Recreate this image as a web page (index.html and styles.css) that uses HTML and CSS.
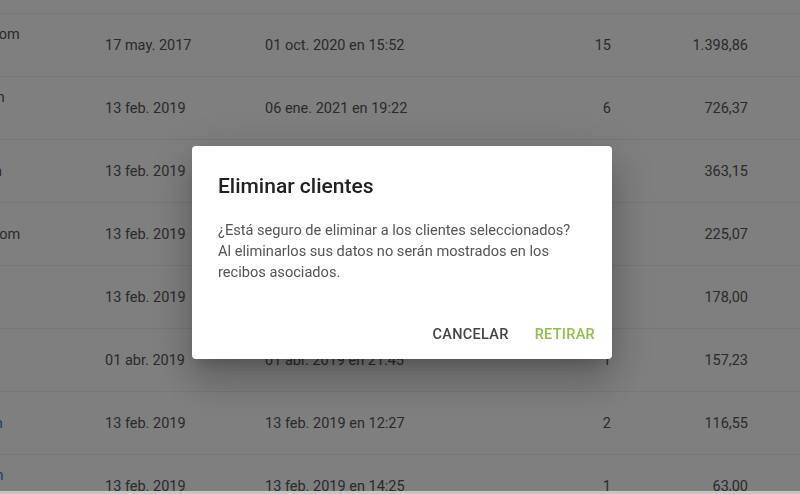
FILE: index.html
```html
<!DOCTYPE html>
<html lang="es">
<head>
  <meta charset="UTF-8">
  <title>Clientes</title>
  <link rel="stylesheet" href="styles.css">
</head>
<body>
  <div class="table-wrap">
    <table class="clients">
      <colgroup>
        <col class="c-email"><col class="c-alta"><col class="c-ultimo"><col class="c-recibos"><col class="c-total"><col class="c-rest">
      </colgroup>
      <tbody>
        <tr><td>pedro.alvarez@gmail.com</td><td>02 ene. 2017</td><td>12 mar. 2020 en 10:12</td><td class="num">21</td><td class="num">1.620,40</td><td></td></tr>
        <tr><td><div>gestion.martinez.sl@hotmail.com</div><div>&nbsp;</div></td><td>17 may. 2017</td><td>01 oct. 2020 en 15:52</td><td class="num">15</td><td class="num">1.398,86</td><td></td></tr>
        <tr><td><div>laura.fernandez.r@outlook.com</div><div>&nbsp;</div></td><td>13 feb. 2019</td><td>06 ene. 2021 en 19:22</td><td class="num">6</td><td class="num">726,37</td><td></td></tr>
        <tr><td>ramon.gutierrez.ro@gmail.com</td><td>13 feb. 2019</td><td>13 feb. 2019 en 11:05</td><td class="num">3</td><td class="num">363,15</td><td></td></tr>
        <tr><td>contabilidad.sanchez@gmail.com</td><td>13 feb. 2019</td><td>13 feb. 2019 en 11:40</td><td class="num">3</td><td class="num">225,07</td><td></td></tr>
        <tr><td>Sin correo</td><td>13 feb. 2019</td><td>13 feb. 2019 en 11:58</td><td class="num">2</td><td class="num">178,00</td><td></td></tr>
        <tr><td>Sin correo</td><td>01 abr. 2019</td><td>01 abr. 2019 en 21:45</td><td class="num">1</td><td class="num">157,23</td><td></td></tr>
        <tr><td class="link">josep.manuel.ortiz@gmail.com</td><td>13 feb. 2019</td><td>13 feb. 2019 en 12:27</td><td class="num">2</td><td class="num">116,55</td><td></td></tr>
        <tr><td><div class="link">maria.jose.serrano@gmail.com</div><div>&nbsp;</div></td><td>13 feb. 2019</td><td>13 feb. 2019 en 14:25</td><td class="num">1</td><td class="num">63,00</td><td></td></tr>
      </tbody>
    </table>
  </div>

  <div class="overlay">
    <div class="dialog">
      <h3 class="dialog-title">Eliminar clientes</h3>
      <p class="dialog-text">¿Está seguro de eliminar a los clientes seleccionados? Al eliminarlos sus datos no serán mostrados en los recibos asociados.</p>
      <div class="dialog-actions">
        <button type="button" class="btn">Cancelar</button>
        <button type="button" class="btn btn-primary">Retirar</button>
      </div>
    </div>
  </div>
  <div class="hscroll"></div>
</body>
</html>
```

FILE: styles.css
```css
body {
  font-family: Roboto, 'Liberation Sans', Arial, sans-serif;
  background: #fff;
  margin: 0;
  padding: 0;
  overflow: hidden;
}
.table-wrap {
  margin: -49px 0 0 -198px;
}
table.clients {
  border-collapse: collapse;
  table-layout: fixed;
  width: 1100px;
}
.c-email { width: 303px; }
.c-alta { width: 160px; }
.c-ultimo { width: 235px; }
.c-recibos { width: 111px; }
.c-total { width: 137px; }
.c-rest { width: 154px; }
td {
  height: 62px;
  padding: 0;
  font-size: 14.5px;
  line-height: 21px;
  color: #555;
  border-bottom: 1px solid #eee;
  white-space: nowrap;
  vertical-align: middle;
}
td.num {
  text-align: right;
}
.link {
  color: #2f80d0;
}
.overlay {
  position: fixed;
  left: 0;
  top: 0;
  right: 0;
  bottom: 0;
  background: rgba(0,0,0,0.5);
  display: flex;
  align-items: center;
  justify-content: center;
  padding: 11px 0 0 4px;
  box-sizing: border-box;
}
.dialog {
  background: #fff;
  width: 420px;
  height: 213px;
  box-sizing: border-box;
  border-radius: 4px;
  box-shadow: 0 11px 15px -7px rgba(0,0,0,0.2), 0 24px 38px 3px rgba(0,0,0,0.14), 0 9px 46px 8px rgba(0,0,0,0.12);
  padding: 28px 9px 7px 26px;
  display: flex;
  flex-direction: column;
}
.dialog-title {
  margin: 0 0 22px 0;
  font-size: 21px;
  font-weight: 500;
  line-height: 24px;
  color: #212121;
}
.dialog-text {
  margin: 0;
  max-width: 362px;
  font-size: 14.6px;
  line-height: 21px;
  color: #555;
}
.dialog-actions {
  margin-top: auto;
  display: flex;
  justify-content: flex-end;
  gap: 10px;
}
.btn {
  background: none;
  border: none;
  font-family: inherit;
  font-size: 14.5px;
  font-weight: 500;
  text-transform: uppercase;
  letter-spacing: 0.3px;
  color: #444;
  padding: 8px 8px;
  line-height: 18px;
  cursor: pointer;
}
.btn-primary {
  color: #8bc34a;
}
.hscroll {
  position: fixed;
  left: 0;
  right: 0;
  bottom: 0;
  height: 3px;
  background: #c4c4c4;
}
```
